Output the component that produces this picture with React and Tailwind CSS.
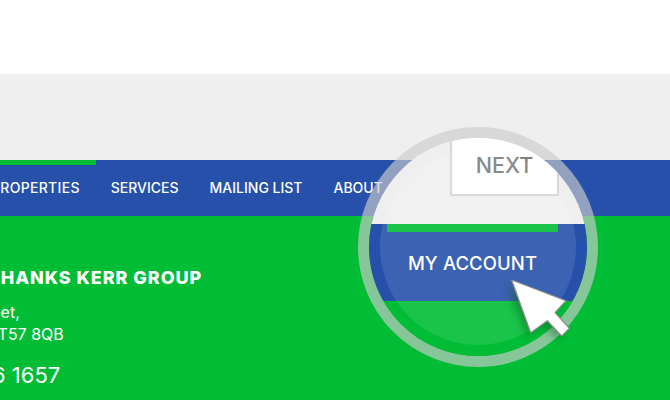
import React from "react";

const font = { fontFamily: "Inter, 'Open Sans', sans-serif" };

const navItems = ["SERVICES", "MAILING LIST", "ABOUT"];

const Cursor = () => (
  <svg className="absolute left-[490px] top-[260px]" width="100" height="90" viewBox="0 0 100 90">
    <defs>
      <filter id="cursorShadow" x="-40%" y="-40%" width="180%" height="180%">
        <feGaussianBlur stdDeviation="4" />
      </filter>
    </defs>
    <path d="M17 26 L38 76 L52 64 L70 80 L74 74 L60 56 L70 44 Z" fill="#0b5a26" opacity="0.5" filter="url(#cursorShadow)" />
    <path
      d="M21.7 20 L76 40.7 L65 52.7 L79.3 68.3 L71.7 76 L57.3 60.7 L40.7 72.7 Z"
      fill="#ffffff"
      stroke="#8f8f8f"
      strokeWidth="1.2"
      strokeLinejoin="round"
    />
  </svg>
);

const Magnifier = () => (
  <div className="absolute left-[358px] top-[127px] h-60 w-60 rounded-full border-[11px] border-[#cbcbcba8]">
    <div className="relative h-full w-full overflow-hidden rounded-full">
      <div className="h-[86px] bg-[#efefef] pl-[81px]">
        <div className="flex h-[58px] w-[109px] items-center justify-center border-x-2 border-b-2 border-[#d6d6d6] bg-white pb-[2px] text-[21.5px] font-medium text-[#7d7d7d]">
          NEXT
        </div>
      </div>
      <div className="h-[77px] bg-[#2650aa] pl-[18px]">
        <div className="h-2 w-[171px] bg-[#00bd35]" />
        <div className="flex h-[64px] w-[171px] items-center justify-center text-[18.5px] font-medium tracking-[0.1px] text-white">
          MY ACCOUNT
        </div>
      </div>
      <div className="h-[55px] bg-[#00bd35]" />
      <div className="absolute left-[11px] top-[11px] h-[196px] w-[196px] rounded-full bg-white/10" />
    </div>
  </div>
);

export default function App() {
  return (
    <div className="relative h-[400px] w-[670px] overflow-hidden bg-white" style={font}>
      <div className="h-[74px] bg-white" />
      <div className="h-[86px] bg-[#efefef]" />
      <nav className="h-14 bg-[#2650aa]">
        <div className="h-[5px] w-24 bg-[#00bd35]" />
        <ul className="flex h-[44px] items-center gap-[31px] text-[14px] font-medium text-white">
          <li className="-ml-[9px] whitespace-nowrap tracking-[0.3px]">PROPERTIES</li>
          {navItems.map((item) => (
            <li key={item} className="whitespace-nowrap">
              {item}
            </li>
          ))}
        </ul>
      </nav>
      <section className="h-[184px] bg-[#00bd35] text-white">
        <h2 className="-ml-[12px] whitespace-nowrap pt-[51px] text-[18px] leading-[22px] font-extrabold tracking-[0.95px]">
          SHANKS KERR GROUP
        </h2>
        <p className="-ml-[30px] pt-[12px] text-[16px] leading-[22px]">Street,</p>
        <p className="-ml-[12px] text-[16px] leading-[22px]">BT57 8QB</p>
        <p className="-ml-[8px] pt-[16px] text-[22px] leading-[28px]">6 1657</p>
      </section>
      <Magnifier />
      <Cursor />
    </div>
  );
}
